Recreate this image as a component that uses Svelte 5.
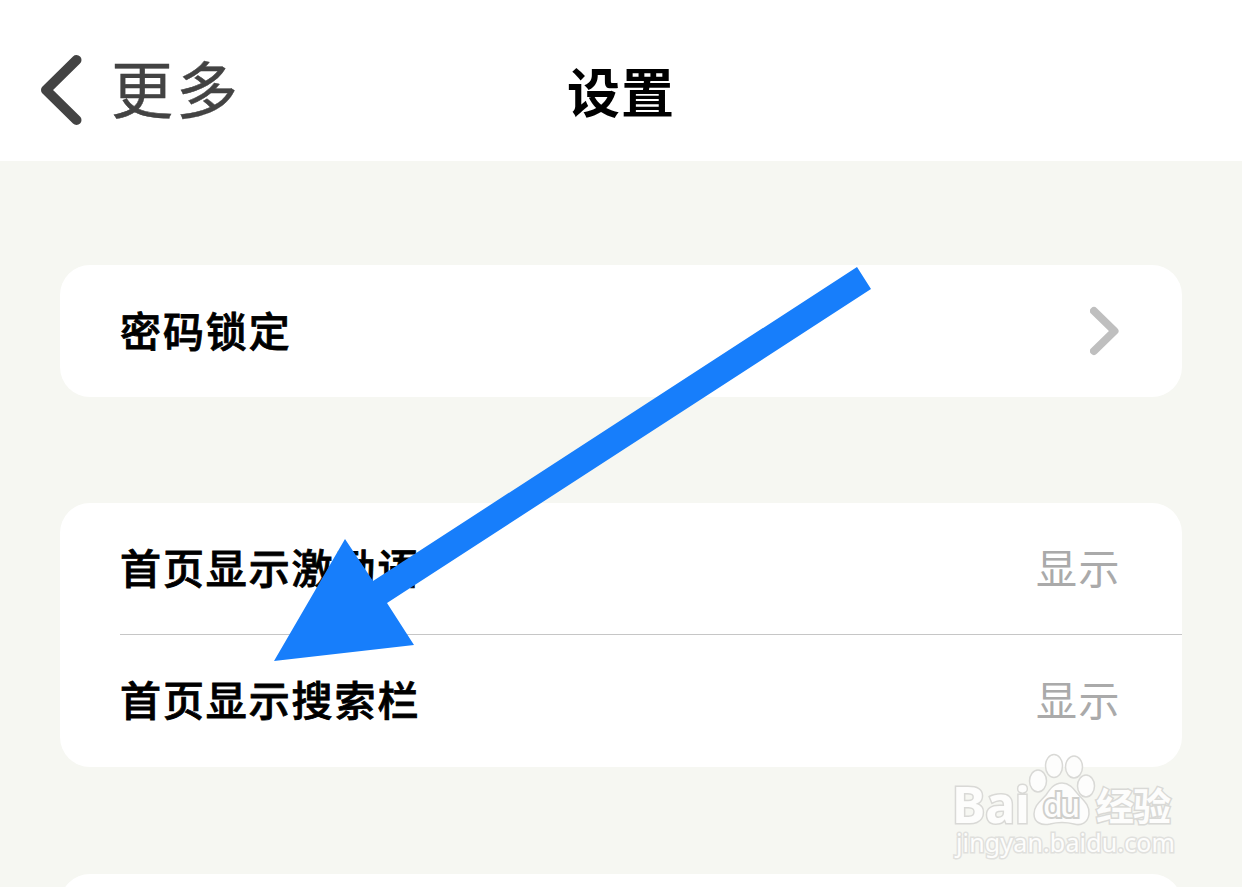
<script lang="ts">
  type Row = {
    label: string
    value?: string
  }

  const groups: Row[][] = [
    [{ label: '密码锁定' }],
    [
      { label: '首页显示激励语', value: '显示' },
      { label: '首页显示搜索栏', value: '显示' },
    ],
    [],
  ]
</script>

<div class="screen">
  <header>
    <button class="back">
      <svg width="42" height="72" viewBox="0 0 42 72">
        <path d="M36.5 6 L6 36 L36.5 66" />
      </svg>
      <span>更多</span>
    </button>
    <h1>设置</h1>
  </header>

  <main>
    {#each groups as rows}
      <section class="card">
        {#each rows as row}
          <div class="row">
            <span class="label">{row.label}</span>
            {#if row.value}
              <span class="value">{row.value}</span>
            {:else}
              <svg class="next" width="30" height="50" viewBox="0 0 30 50">
                <path d="M4 5 L24.5 25 L4 45" />
              </svg>
            {/if}
          </div>
        {/each}
      </section>
    {/each}
  </main>

  <svg class="arrow" width="1242" height="887" viewBox="0 0 1242 887">
    <polygon
      points="857,267 871,289 387,603 414,645 274,661 345,539 373,581"
    />
  </svg>

  <svg class="watermark" width="240" height="120" viewBox="0 0 240 120">
    <text class="brand" x="2" y="73" textLength="78" lengthAdjust="spacingAndGlyphs">Bai</text>
    <ellipse cx="88" cy="31" rx="8.5" ry="11" />
    <ellipse cx="104" cy="16" rx="8.5" ry="11.5" />
    <ellipse cx="124" cy="17" rx="8.5" ry="11" />
    <ellipse cx="136" cy="36" rx="8.5" ry="11" />
    <path
      d="M112 33 C119 33 123 38 127 43 C133 50 140 55 139 64 C138 73 131 76 124 74 C116 72 108 72 100 74 C91 76 84 72 84 64 C84 55 91 51 96 45 C100 39 104 33 112 33 Z"
    />
    <text class="du" x="93" y="67" textLength="37">du</text>
    <text class="jingyan" x="146" y="70" textLength="75">经验</text>
    <text class="url" x="6" y="102" textLength="219">jingyan.baidu.com</text>
  </svg>
</div>

<style>
  :global(body) {
    background: #f6f7f2;
  }

  .screen {
    position: relative;
    height: 887px;
    overflow: hidden;
    background: #f6f7f2;
    font-family: 'Noto Sans CJK SC', sans-serif;
  }

  header {
    display: grid;
    grid-template-columns: 1fr auto 1fr;
    align-items: center;
    box-sizing: border-box;
    height: 161px;
    padding: 19px 40px 0;
    background: white;
  }

  .back {
    display: flex;
    align-items: center;
    gap: 29px;
    padding: 0;
    border: 0;
    background: none;
    color: #434343;
    font: inherit;
    font-size: 62px;
    letter-spacing: 3px;
    line-height: 72px;
  }

  .back span {
    margin-top: -7px;
    -webkit-text-stroke: 0.4px;
  }

  .back path,
  .next path {
    fill: none;
    stroke: #434343;
    stroke-width: 10;
    stroke-linecap: round;
    stroke-linejoin: round;
  }

  h1 {
    margin: 0;
    font-size: 53px;
    font-weight: 600;
    letter-spacing: 1px;
    line-height: 72px;
  }

  main {
    display: flex;
    flex-direction: column;
    gap: 106px;
    padding: 104px 60px 0;
  }

  .card {
    min-height: 132px;
    border-radius: 30px;
    background: white;
  }

  .card:last-child {
    margin-top: 1px;
  }

  .row {
    display: flex;
    align-items: center;
    justify-content: space-between;
    box-sizing: border-box;
    height: 132px;
    margin-left: 60px;
    padding-right: 62px;
  }

  .row:not(:last-child) {
    height: 131px;
  }

  .row + .row {
    height: 133px;
    padding-bottom: 2px;
    border-top: 1px solid #c6c6c6;
  }

  .label,
  .value {
    margin-top: -5px;
    font-size: 41px;
  }

  .label {
    font-weight: 500;
    letter-spacing: 1.9px;
    -webkit-text-stroke: 0.8px;
  }

  .value {
    margin-right: -1px;
    color: #aaa;
    letter-spacing: 1.5px;
  }

  .next path {
    stroke: #bfbfbf;
    stroke-width: 8;
  }

  .arrow {
    position: absolute;
    top: 0;
    left: 0;
    fill: #177efb;
  }

  .watermark {
    position: absolute;
    top: 750px;
    left: 950px;
    fill: #fdfdfc;
    stroke: #d9d9d6;
    stroke-width: 1.5;
  }

  .watermark text {
    paint-order: stroke;
    stroke-width: 3;
  }

  .brand {
    font-family: 'Noto Sans', sans-serif;
    font-size: 50px;
    font-weight: bold;
  }

  .watermark .du {
    font-family: 'Noto Sans', sans-serif;
    font-size: 32px;
    font-weight: 500;
    stroke: #cfcfcc;
    stroke-width: 4;
  }

  .jingyan {
    font-size: 38px;
    font-weight: 700;
  }

  .watermark .url {
    font-family: 'Noto Sans', sans-serif;
    font-size: 25px;
    stroke: #e0e0dd;
  }
</style>
